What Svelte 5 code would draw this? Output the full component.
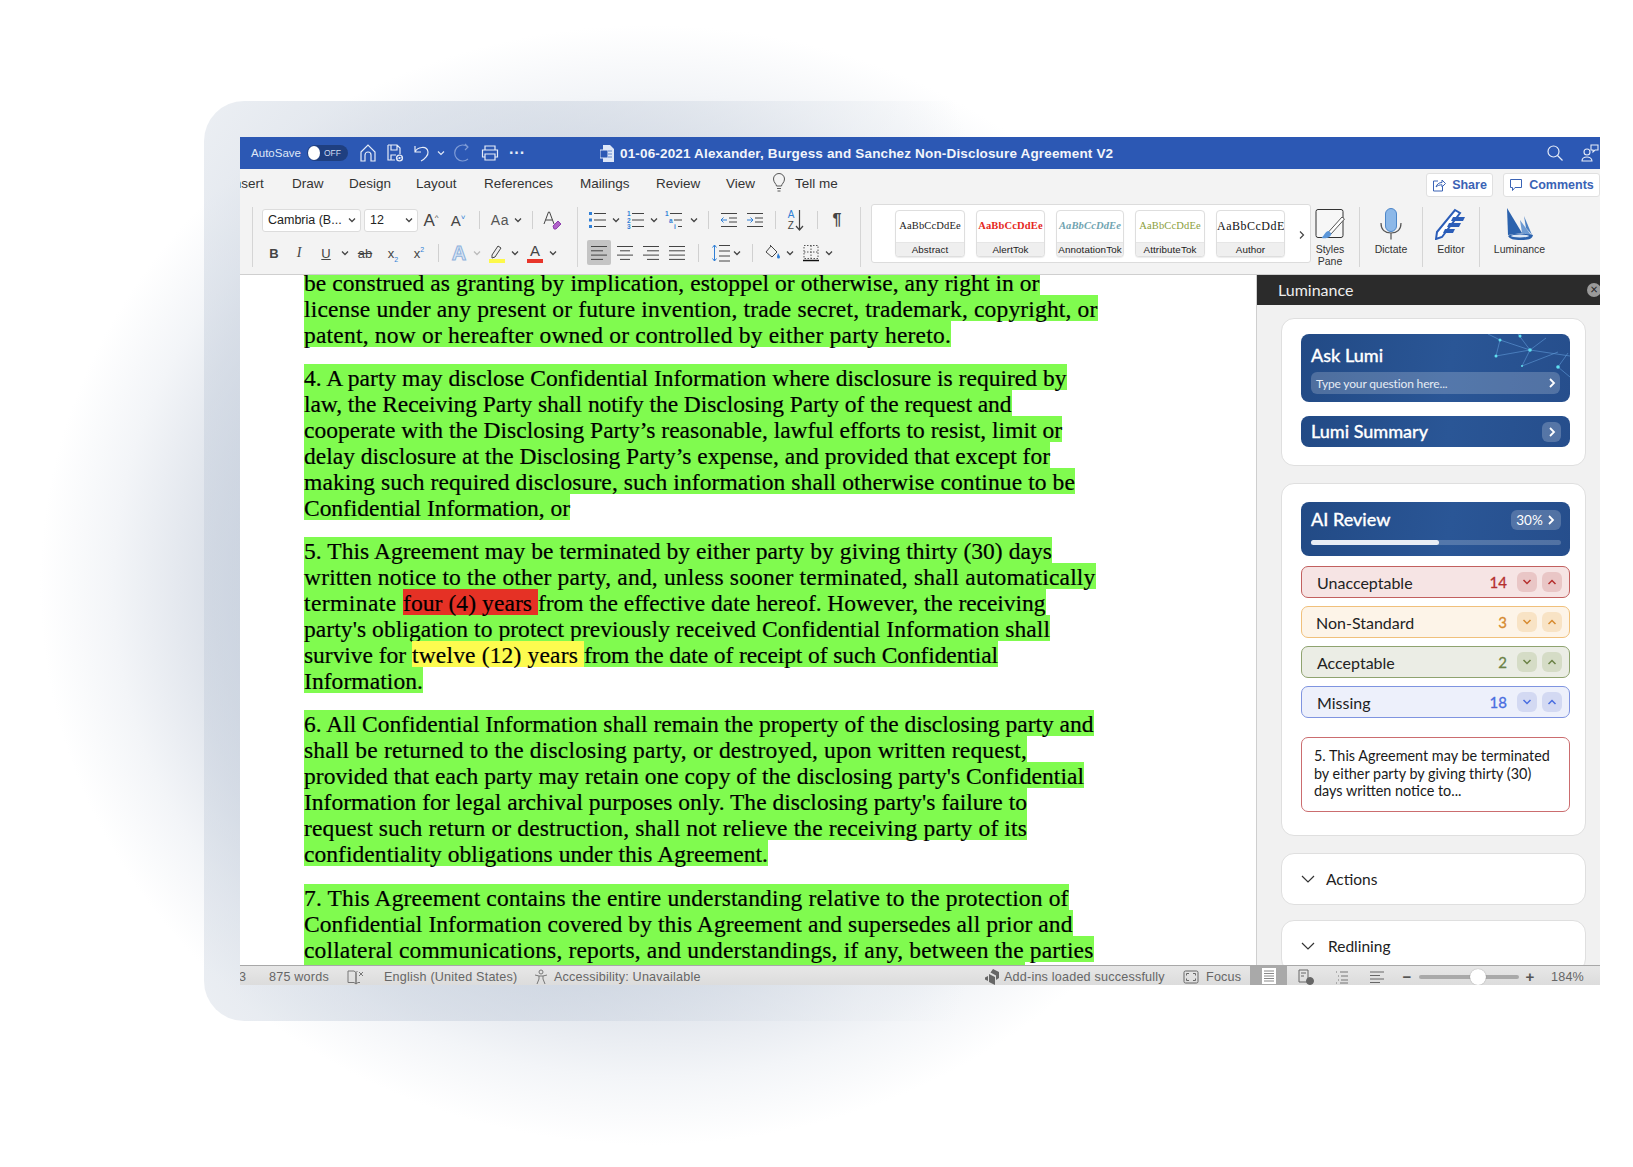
<script>
  // places cells in a flex row, so each one is centred on its x coordinate
  const lay = (items, x0) => {
    let x = x0;
    return items.map((it) => {
      const ml = it.c - it.w / 2 - x;
      x = it.c + it.w / 2;
      return { ...it, ml };
    });
  };
  const c = (k, cx, w = 24) => ({ k, c: cx, w });

  const titleItems = lay(
    [c('autosave', 276, 52), c('toggle', 327.5, 41), c('home', 368), c('save', 395), c('undo', 422), c('chevw', 441, 10), c('redo', 463), c('print', 490), c('dots', 517), c('docicon', 607, 16), c('title', 867, 494), c('search', 1555), c('people', 1590)],
    240
  );

  const tabs = [
    ['Insert', 230, 62], ['Draw', 292, 57], ['Design', 349, 67], ['Layout', 416, 68],
    ['References', 484, 96], ['Mailings', 580, 76], ['Review', 656, 70], ['View', 726, 46]
  ];

  const row1a = lay([c('font', 311.5, 99), c('size', 391, 54), c('growA', 431), c('shrinkA', 458), c('sep', 479, 1), c('aa', 500), c('chev', 518, 12), c('sep', 532, 1), c('clear', 552)], 253);
  const row2a = lay([c('B', 274), c('I', 299), c('U', 326), c('chev', 345, 12), c('ab', 365), c('x2', 393), c('xs', 419), c('sep', 438, 1), c('effectA', 459), c('chevl', 477, 12), c('hilite', 497), c('chev', 515, 12), c('colorA', 535), c('chev', 553, 12)], 253);
  const row1b = lay([c('bullets', 598), c('chev', 616, 12), c('numbers', 636), c('chev', 654, 12), c('multi', 674), c('chev', 694, 12), c('sep', 708, 1), c('outdent', 729), c('indent', 755), c('sep', 775, 1), c('sort', 796), c('sep', 817, 1), c('pilcrow', 837)], 578);
  const row2b = lay([c('alignL', 599), c('alignC', 625), c('alignR', 651), c('alignJ', 677), c('sep', 698, 1), c('spacing', 721), c('chev', 737, 12), c('sep', 752, 1), c('fill', 773), c('chev', 790, 12), c('borders', 811), c('chev', 829, 12)], 578);

  const styles = [
    { name: 'Abstract', cls: 's-abs', w: 70 },
    { name: 'AlertTok', cls: 's-alert', w: 69 },
    { name: 'AnnotationTok', cls: 's-anno', w: 68 },
    { name: 'AttributeTok', cls: 's-attr', w: 70 },
    { name: 'Author', cls: 's-auth', w: 69 }
  ];

  // a line is [right edge, text]; marked lines list their pieces as [text, width, mark]
  const paragraphs = [
    [
      [1039.5, 'be construed as granting by implication, estoppel or otherwise, any right in or'],
      [1097.5, 'license under any present or future invention, trade secret, trademark, copyright, or'],
      [951, 'patent, now or hereafter owned or controlled by either party hereto.']
    ],
    [
      [1066.5, '4. A party may disclose Confidential Information where disclosure is required by'],
      [1011.5, 'law, the Receiving Party shall notify the Disclosing Party of the request and'],
      [1062, 'cooperate with the Disclosing Party’s reasonable, lawful efforts to resist, limit or'],
      [1050, 'delay disclosure at the Disclosing Party’s expense, and provided that except for'],
      [1075, 'making such required disclosure, such information shall otherwise continue to be'],
      [570, 'Confidential Information, or']
    ],
    [
      [1052, '5. This Agreement may be terminated by either party by giving thirty (30) days'],
      [1095.5, 'written notice to the other party, and, unless sooner terminated, shall automatically'],
      [1045.5, [['terminate ', 99, ''], ['four (4) years ', 135, 'mark-red'], ['from the effective date hereof. However, the receiving', 507.5, '']]],
      [1050, "party's obligation to protect previously received Confidential Information shall"],
      [998, [['survive for ', 108, ''], ['twelve (12) years ', 172, 'mark-yellow'], ['from the date of receipt of such Confidential', 414, '']]],
      [423, 'Information.']
    ],
    [
      [1093.5, '6. All Confidential Information shall remain the property of the disclosing party and'],
      [1027, 'shall be returned to the disclosing party, or destroyed, upon written request,'],
      [1084, "provided that each party may retain one copy of the disclosing party's Confidential"],
      [1027, "Information for legal archival purposes only. The disclosing party's failure to"],
      [1027, 'request such return or destruction, shall not relieve the receiving party of its'],
      [768, 'confidentiality obligations under this Agreement.']
    ],
    [
      [1068.5, '7. This Agreement contains the entire understanding relative to the protection of'],
      [1072.5, 'Confidential Information covered by this Agreement and supersedes all prior and'],
      [1093.5, 'collateral communications, reports, and understandings, if any, between the parties'],
      [1025, '\u00a0']
    ]
  ];
  const DOC_LEFT = 304;

  // squeeze or stretch a piece of text with letter spacing so it ends where the reference does
  function fit(el, width) {
    const range = document.createRange();
    range.selectNodeContents(el);
    const natural = range.getBoundingClientRect().width;
    const chars = el.textContent.length;
    if (chars > 1) el.style.letterSpacing = (width - natural) / chars + 'px';
  }

  const reviewRows = [
    { label: 'Unacceptable', count: 14, cls: 'red', pad: 15 },
    { label: 'Non-Standard', count: 3, cls: 'orange', pad: 14 },
    { label: 'Acceptable', count: 2, cls: 'green', pad: 15 },
    { label: 'Missing', count: 18, cls: 'blue', pad: 15 }
  ];

  const statusItems = lay(
    [c('s3', 245, 12), c('words', 302, 66), c('book', 356, 18), c('lang', 451, 134), c('a11y', 541, 16), c('acc', 627, 146), c('addicon', 992, 16), c('addins', 1086, 164), c('focusicon', 1191, 16), c('focus', 1224, 36), c('viewprint', 1268.5, 37), c('viewweb', 1306, 20), c('viewoutline', 1342, 20), c('viewdraft', 1377, 20), c('minus', 1407, 12), c('slider', 1469, 100), c('plus', 1530, 12), c('zoom', 1571, 40)],
    240
  );
</script>

{#snippet bars(lines)}
  <svg width="20" height="20" viewBox="0 0 20 20" fill="none" stroke="#444" stroke-width="1">
    {#each lines as [a, b], i}
      <path d="M{a} {3.5 + i * 4.3}H{b}" />
    {/each}
  </svg>
{/snippet}

{#snippet icon(k)}
  {#if k === 'sep'}<span class="vsep"></span>
  {:else if k === 'chev'}
    <svg width="10" height="10" viewBox="0 0 10 10" fill="none" stroke="#444" stroke-width="1.3"><path d="M2 3.5l3 3 3-3" /></svg>
  {:else if k === 'chevl'}
    <svg width="10" height="10" viewBox="0 0 10 10" fill="none" stroke="#bbb" stroke-width="1.3"><path d="M2 3.5l3 3 3-3" /></svg>
  {:else if k === 'chevw'}
    <svg width="10" height="10" viewBox="0 0 10 10" fill="none" stroke="#dfe7f7" stroke-width="1.2"><path d="M2 3.5l3 3 3-3" /></svg>
  {:else if k === 'autosave'}<span class="autosave">AutoSave</span>
  {:else if k === 'toggle'}<span class="toggle"><i></i><b>OFF</b></span>
  {:else if k === 'home'}
    <svg width="18" height="20" viewBox="0 0 18 20" fill="none" stroke="#e6ecf8" stroke-width="1.2"><path d="M2 9l7-7 7 7v9h-4v-6a3 3 0 0 0-6 0v6H2z" /></svg>
  {:else if k === 'save'}
    <svg width="18" height="20" viewBox="0 0 18 20" fill="none" stroke="#e6ecf8" stroke-width="1.2"><path d="M2 2h9l3 3v6M2 2v15h7M5 2v5h6V2M5 17v-5h5" /><circle cx="13.5" cy="15" r="3.6" fill="#e6ecf8" stroke="none" /><path d="M11.8 15a1.8 1.8 0 0 1 3.4-.6M15.2 15a1.8 1.8 0 0 1-3.4.6" stroke="#2c58b4" /></svg>
  {:else if k === 'undo'}
    <svg width="18" height="20" viewBox="0 0 18 20" fill="none" stroke="#e6ecf8" stroke-width="1.2"><path d="M2 3v6h6M2 9c2-5 12-7 13 0 .4 3-3 7-7 9" /></svg>
  {:else if k === 'redo'}
    <svg width="18" height="20" viewBox="0 0 18 20" fill="none" stroke="#7e9bd6" stroke-width="1.2"><path d="M14 4a8 8 0 1 0 0 12M11 1l3 3-3 3" /></svg>
  {:else if k === 'print'}
    <svg width="18" height="18" viewBox="0 0 18 18" fill="none" stroke="#e6ecf8" stroke-width="1.2"><path d="M4 6V2h10v4M4 13H1.500V6h15v7H14M4 10h10v6H4z" /></svg>
  {:else if k === 'dots'}<span class="dots">···</span>
  {:else if k === 'docicon'}
    <svg width="14" height="17" viewBox="0 0 14 17"><path d="M3 0h7l4 4v13H3z" fill="#dde6f7" /><rect y="5" width="8" height="8" fill="#2c58b4" stroke="#dde6f7" /><path d="M8 6h4M8 9h4M8 12h4" stroke="#5f83cc" /></svg>
  {:else if k === 'title'}<span class="doc-title">01-06-2021 Alexander, Burgess and Sanchez Non-Disclosure Agreement V2</span>
  {:else if k === 'search'}
    <svg width="18" height="18" viewBox="0 0 18 18" fill="none" stroke="#e6ecf8" stroke-width="1.2"><circle cx="7.500" cy="7.500" r="5.500" /><path d="M11.500 11.500l5 5" /></svg>
  {:else if k === 'people'}
    <svg width="20" height="20" viewBox="0 0 20 20" fill="none" stroke="#e6ecf8" stroke-width="1.1"><circle cx="7" cy="9" r="3" /><path d="M2 18c0-3 3-4 5-4s5 1 5 4zM11 2h7v5h-3l-2 2V7h-2z" /></svg>
  {:else if k === 'font'}<span class="combo">Cambria (B...<svg width="10" height="10" viewBox="0 0 10 10" fill="none" stroke="#444" stroke-width="1.300"><path d="M2 3.500l3 3 3-3" /></svg></span>
  {:else if k === 'size'}<span class="combo">12<svg width="10" height="10" viewBox="0 0 10 10" fill="none" stroke="#444" stroke-width="1.300"><path d="M2 3.500l3 3 3-3" /></svg></span>
  {:else if k === 'growA'}<span class="glyph big">A<sup>^</sup></span>
  {:else if k === 'shrinkA'}<span class="glyph mid">A<sup class="blue-sup">˅</sup></span>
  {:else if k === 'aa'}<span class="glyph aa">Aa</span>
  {:else if k === 'clear'}
    <svg width="22" height="22" viewBox="0 0 22 22" fill="none"><path d="M3 15L7.500 3h1L13 15M4.800 11h6.500" stroke="#444" stroke-width="1" /><path d="M12 17l5-5 3 3-5 5h-2z" fill="#b061c8" stroke="#8e3fae" /></svg>
  {:else if k === 'B'}<span class="glyph fmt bold">B</span>
  {:else if k === 'I'}<span class="glyph fmt ital">I</span>
  {:else if k === 'U'}<span class="glyph fmt under">U</span>
  {:else if k === 'ab'}<span class="glyph fmt strike">ab</span>
  {:else if k === 'x2'}<span class="glyph fmt">x<sub>2</sub></span>
  {:else if k === 'xs'}<span class="glyph fmt">x<sup>2</sup></span>
  {:else if k === 'effectA'}<span class="glyph effect">A</span>
  {:else if k === 'hilite'}
    <svg width="18" height="22" viewBox="0 0 18 22" fill="none"><path d="M4 13l6-9 3 2-6 9-3 1z" stroke="#444" fill="#eee" /><rect x="1" y="17" width="16" height="4" fill="#fdf94a" /></svg>
  {:else if k === 'colorA'}<span class="glyph color">A</span>
  {:else if k === 'bullets'}
    <svg width="20" height="20" viewBox="0 0 20 20" fill="none" stroke="#444">
      <path d="M6 3.500h12M6 10h12M6 16.500h12" />
      <g fill="#2f7fd6" stroke="none"><rect x="1" y="2" width="3" height="3" /><rect x="1" y="8.500" width="3" height="3" /><rect x="1" y="15" width="3" height="3" /></g>
    </svg>
  {:else if k === 'numbers'}
    <svg width="20" height="20" viewBox="0 0 20 20" fill="none" stroke="#444">
      <path d="M6 3.500h12M6 10h12M6 16.500h12" />
      <g fill="#2f7fd6" stroke="none" font-size="6.500" font-family="Liberation Sans" font-weight="700"><text x="1" y="6">1</text><text x="1" y="12.500">2</text><text x="1" y="19">3</text></g>
    </svg>
  {:else if k === 'multi'}
    <svg width="20" height="20" viewBox="0 0 20 20" fill="none" stroke="#444">
      <path d="M6 3.500h12M10 10h8M14 16.500h4" />
      <g fill="#2f7fd6" stroke="none" font-size="6.500" font-family="Liberation Sans" font-weight="700"><text x="1" y="6">1</text><text x="5" y="12.500">a</text><text x="10" y="19">i</text></g>
    </svg>
  {:else if k === 'outdent' || k === 'indent'}
    <svg width="20" height="20" viewBox="0 0 20 20" fill="none" stroke="#444">
      <path d="M2 3.500h16M10 8h8M10 12h8M2 16.500h16" />
      {#if k === 'outdent'}<path d="M8 10H2M4.500 7.500L2 10l2.500 2.500" stroke="#2f7fd6" />
      {:else}<path d="M2 10h6M5.500 7.500L8 10l-2.500 2.500" stroke="#2f7fd6" />{/if}
    </svg>
  {:else if k === 'sort'}<span class="sort"><span><b>A</b><em>Z</em></span><svg width="9" height="24" viewBox="0 0 9 24" fill="none" stroke="#444" stroke-width="1.200"><path d="M4.500 2v20M1 18l3.500 4L8 18" /></svg></span>
  {:else if k === 'pilcrow'}<span class="glyph pil">¶</span>
  {:else if k === 'alignL'}{@render bars([[2, 18], [2, 14], [2, 18], [2, 14]])}
  {:else if k === 'alignC'}{@render bars([[2, 18], [5, 15], [2, 18], [5, 15]])}
  {:else if k === 'alignR'}{@render bars([[2, 18], [6, 18], [2, 18], [6, 18]])}
  {:else if k === 'alignJ'}{@render bars([[2, 18], [2, 18], [2, 18], [2, 18]])}
  {:else if k === 'spacing'}
    <svg width="20" height="22" viewBox="0 0 20 22" fill="none" stroke="#444"><path d="M8 3.500h11M8 9h11M8 14h11M8 19h11" /><path d="M3.500 3v16M1.500 5.500l2-2.500 2 2.500M1.500 16.500l2 2.500 2-2.500" stroke="#2f7fd6" /></svg>
  {:else if k === 'fill'}
    <svg width="20" height="20" viewBox="0 0 20 20" fill="none" stroke="#444"><path d="M8 3l6 6-5 5-6-5zM8 3l-1-1" /><path d="M15 10c1 2 2 3 2 4a1.500 1.500 0 0 1-3 0c0-1 .5-2 1-4z" fill="#2f7fd6" stroke="none" /></svg>
  {:else if k === 'borders'}
    <svg width="20" height="20" viewBox="0 0 20 20" fill="none" stroke="#555" stroke-dasharray="1.500 1.500"><path d="M3 2.500h14v13H3zM10 2.500v13M3 9h14" /><path d="M2 17.500h16" stroke="#111" stroke-width="1.500" stroke-dasharray="none" /></svg>
  {:else if k === 's3'}3
  {:else if k === 'words'}875 words
  {:else if k === 'book'}
    <svg width="18" height="16" viewBox="0 0 18 16" fill="none" stroke="#777"><path d="M1 2h6l2 1.500V15l-2-1.500H1zM9 3.500V15M9 3.500L10.500 2M12 3l4 4M16 3l-4 4M9 15l2-1.500h2" /></svg>
  {:else if k === 'lang'}English (United States)
  {:else if k === 'a11y'}
    <svg width="16" height="16" viewBox="0 0 16 16" fill="none" stroke="#777"><circle cx="8" cy="3" r="2" /><path d="M2 6l4 1h4l4-1M6 7v3l-2 5M10 7v3l2 5" /></svg>
  {:else if k === 'acc'}Accessibility: Unavailable
  {:else if k === 'addicon'}
    <svg width="16" height="16" viewBox="0 0 16 16" fill="#666"><path d="M9 0l6 3v6l-3 2V6.500L6.500 3.500zM5 5l6 3v8l-6-3zM1 8.500l3-1.500v5l-3-1.500z" /></svg>
  {:else if k === 'addins'}Add-ins loaded successfully
  {:else if k === 'focusicon'}
    <svg width="16" height="14" viewBox="0 0 16 14" fill="none" stroke="#666"><rect x="1" y="1" width="14" height="12" rx="1.500" /><path d="M3.500 5.500v-2h2.500M12.500 5.500v-2H10M3.500 8.500v2h2.500M12.500 8.500v2H10" /></svg>
  {:else if k === 'focus'}Focus
  {:else if k === 'viewprint'}
    <span class="view-on"><svg width="14" height="16" viewBox="0 0 14 16"><rect width="14" height="16" fill="#fff" /><path d="M2 3h10M2 5.500h10M2 8h10M2 10.500h10M2 13h10" stroke="#888" /></svg></span>
  {:else if k === 'viewweb'}
    <svg width="18" height="18" viewBox="0 0 18 18" fill="none" stroke="#666"><path d="M2 2h9v12H2zM4 5h5M4 8h3" /><circle cx="13" cy="13" r="3.500" fill="#666" /></svg>
  {:else if k === 'viewoutline'}
    <svg width="16" height="16" viewBox="0 0 16 16" fill="none" stroke="#777"><path d="M2 3h1M6 3h8M4 7h1M7 7h7M4 11h1M7 11h7M2 14h1M6 14h8" /></svg>
  {:else if k === 'viewdraft'}
    <svg width="16" height="16" viewBox="0 0 16 16" fill="none" stroke="#666"><path d="M1 3h14M1 6.500h10M1 10h14M1 13.500h10" /></svg>
  {:else if k === 'minus'}<span class="zoom-sign">−</span>
  {:else if k === 'plus'}<span class="zoom-sign">+</span>
  {:else if k === 'slider'}<span class="slider"><i></i></span>
  {:else if k === 'zoom'}184%
  {/if}
{/snippet}

{#snippet cells(items)}
  {#each items as it}
    <span class="cell" class:text={['s3','words','lang','acc','addins','focus','zoom'].includes(it.k)} style="width:{it.w}px;margin-left:{it.ml}px">{@render icon(it.k)}</span>
  {/each}
{/snippet}

{#snippet chevronRight()}
  <svg width="10" height="12" viewBox="0 0 10 12" fill="none" stroke="#fff" stroke-width="1.800"><path d="M3 2l4 4-4 4" /></svg>
{/snippet}

<div class="page">
  <div class="backdrop"></div>
  <div class="window">
    <header class="titlebar">{@render cells(titleItems)}</header>

    <nav class="tabs">
      <div class="tab-list">
        {#each tabs as [name, x, w], i}
          <span style="width:{w}px;{i === 0 ? `margin-left:${x - 240}px` : ''}">{name}</span>
        {/each}
        <svg class="bulb" width="14" height="20" viewBox="0 0 14 20" fill="none" stroke="#555"><path d="M4.500 13c0-2-3-3.500-3-7a5.500 5.500 0 0 1 11 0c0 3.500-3 5-3 7zM5 15.500h4M5.500 18h3" /></svg>
        <span>Tell me</span>
      </div>
      <div class="actions">
        <button class="share">
          <svg width="14" height="14" viewBox="0 0 14 14" fill="none" stroke="#3a63b5"><path d="M6 3H1.500v10h9V8M4 9c1-3 3-4.500 6-4.500V2l3.500 3.500L10 9V6.800C7.500 6.800 5.500 7.500 4 9z" /></svg>
          Share
        </button>
        <button class="comments">
          <svg width="14" height="14" viewBox="0 0 14 14" fill="none" stroke="#3a63b5"><path d="M1.500 1.500h11v8H6L3.500 12.500v-3h-2z" /></svg>
          Comments
        </button>
      </div>
    </nav>

    <section class="ribbon">
      <div class="group first">
        <div class="rrow">{@render cells(row1a)}</div>
        <div class="rrow">{@render cells(row2a)}</div>
      </div>
      <div class="group second">
        <span class="active-align"></span>
        <div class="rrow">{@render cells(row1b)}</div>
        <div class="rrow">{@render cells(row2b)}</div>
      </div>
      <div class="gallery">
        {#each styles as s}
          <div class="tile" style="width:{s.w}px">
            <div class="sample {s.cls}">AaBbCcDdEe</div>
            <div class="tile-name">{s.name}</div>
          </div>
        {/each}
        <svg class="more" width="8" height="10" viewBox="0 0 8 10" fill="none" stroke="#444" stroke-width="1.200"><path d="M2 1.500L5.500 5 2 8.500" /></svg>
      </div>
      <div class="tool t-styles">
        <svg width="30" height="32" viewBox="0 0 30 32" fill="none">
          <rect x="1" y="1.500" width="27" height="28" rx="2" stroke="#333" fill="#f7f7f7" />
          <path d="M29.500 11L16 26l-2.500-2L27 9z" fill="#fff" stroke="#555" />
          <path d="M13.500 23c-3 0-4 4-7 7 4 1 9 0 10-4.500z" fill="#5b96d8" />
        </svg>
        <span>Styles<br />Pane</span>
      </div>
      <div class="tool t-dictate">
        <svg width="24" height="32" viewBox="0 0 24 32" fill="none">
          <rect x="6.500" y="0.500" width="11" height="23" rx="5.500" fill="#8cb8e8" stroke="#4c86c8" />
          <path d="M2 15c0 7 4 10 10 10s10-3 10-10M12 25v6.500" stroke="#555" stroke-width="1.200" />
        </svg>
        <span>Dictate</span>
      </div>
      <div class="tool t-editor">
        <svg width="32" height="32" viewBox="0 0 32 32" fill="none">
          <path d="M20 2l5 3L7 29l-6 2 1-7z" fill="#fff" stroke="#2b5db8" stroke-width="2" />
          <path d="M18 9h12l-2 4H16zM14 15h12l-2 4H12zM10 21h10l-2 4H8z" fill="#2b5db8" />
        </svg>
        <span>Editor</span>
      </div>
      <div class="tool t-lum">
        <svg width="28" height="32" viewBox="0 0 28 32">
          <path d="M1 0l15 25-14 2z" fill="#2b62ad" />
          <path d="M14 12l11 15-9-2z" fill="#6e9bd2" />
          <path d="M18 8l8 19-6-7z" fill="#4b80c2" />
          <path d="M2 28c5-3 20-3 25-1-1 4-4 5-12 5s-11-1-13-4z" fill="#2b62ad" />
          <ellipse cx="14" cy="28" rx="9" ry="1.500" fill="#dce8f5" />
        </svg>
        <span>Luminance</span>
      </div>
    </section>

    <main class="body">
      <article class="doc">
        {#each paragraphs as lines}
          <div class="para">
            {#each lines as [end, text]}
              <div class="line" style="width:{end - DOC_LEFT}px">
                {#if Array.isArray(text)}
                  <span class="pieces">
                    {#each text as [piece, w, mark]}
                      <span class="piece {mark}" use:fit={w}>{piece}</span>
                    {/each}
                  </span>
                {:else}
                  <span class="line-text" use:fit={end - DOC_LEFT}>{text}</span>
                {/if}
              </div>
            {/each}
          </div>
        {/each}
      </article>

      <aside class="pane">
        <div class="pane-head">
          <span>Luminance</span>
          <span class="pane-close">×</span>
        </div>

        <div class="card first-card">
          <div class="blue ask">
            <svg class="network" width="90" height="44" viewBox="0 0 90 44" fill="none" stroke="#5f9ad8" stroke-width="0.600">
              <path d="M8 0l12 6-4 16M20 6l30 10 16-12M38 0l12 16-8 16M16 22l34-6 40 6M42 32l36-14M78 33l12 10M78 33l10-14" />
              <g fill="#5fe0f0" stroke="none">
                <circle cx="20" cy="6" r="1.500" /><circle cx="16" cy="22" r="1.500" /><circle cx="50" cy="16" r="1.800" />
                <circle cx="40" cy="2" r="1.500" /><circle cx="42" cy="32" r="1" /><circle cx="78" cy="33" r="1.800" />
              </g>
            </svg>
            <div class="heading">Ask Lumi</div>
            <div class="ask-input">
              <span>Type your question here...</span>
              {@render chevronRight()}
            </div>
          </div>
          <div class="blue summary">
            <div class="heading">Lumi Summary</div>
            <span class="chev-box">{@render chevronRight()}</span>
          </div>
        </div>

        <div class="card review-card">
          <div class="blue review">
            <div class="review-top">
              <div class="heading">AI Review</div>
              <span class="percent">30% {@render chevronRight()}</span>
            </div>
            <div class="progress"><i></i></div>
          </div>

          <div class="rows">
            {#each reviewRows as r}
              <div class="rv {r.cls}">
                <span class="rv-label" style="padding-left:{r.pad}px">{r.label}</span>
                <span class="rv-count">{r.count}</span>
                <span class="rv-btn"><svg width="10" height="8" viewBox="0 0 10 8" fill="none" stroke-width="1.500"><path d="M1.500 2L5 5.500 8.500 2" /></svg></span>
                <span class="rv-btn"><svg width="10" height="8" viewBox="0 0 10 8" fill="none" stroke-width="1.500"><path d="M1.500 6L5 2.500 8.500 6" /></svg></span>
              </div>
            {/each}
          </div>

          <div class="detail">5. This Agreement may be terminated by either party by giving thirty (30) days written notice to...</div>
        </div>

        <div class="card fold">
          <svg width="14" height="10" viewBox="0 0 14 10" fill="none" stroke="#333" stroke-width="1.200"><path d="M1 2l6 6 6-6" /></svg>
          <span>Actions</span>
        </div>
        <div class="card fold redline">
          <svg width="14" height="10" viewBox="0 0 14 10" fill="none" stroke="#333" stroke-width="1.200"><path d="M1 2l6 6 6-6" /></svg>
          <span>Redlining</span>
        </div>
      </aside>
    </main>

    <footer class="status">{@render cells(statusItems)}</footer>
  </div>
</div>

<style>
  :global(body) {
    margin: 0;
    background: #fff;
  }

  .page {
    position: relative;
    box-sizing: border-box;
    width: 1633px;
    height: 1167px;
    padding: 137px 33px 0 240px;
    overflow: hidden;
    background: radial-gradient(ellipse 610px 560px at 650px 585px, #aebbd0 0%, #bcc7d8 45%, #dde2ea 72%, #f3f5f8 88%, #fff 100%);
    font-family: 'Liberation Sans', sans-serif;
  }

  .backdrop {
    position: absolute;
    left: 204px;
    top: 101px;
    width: 900px;
    height: 920px;
    border-radius: 40px;
    background: radial-gradient(ellipse 560px 900px at 30% 50%, rgba(185, 197, 215, 0.6) 0%, rgba(200, 209, 222, 0.55) 50%, rgba(232, 236, 241, 0.5) 85%, rgba(255, 255, 255, 0) 100%);
  }

  .window {
    position: relative;
    display: flex;
    flex-direction: column;
    width: 1360px;
    height: 848px;
    overflow: hidden;
    background: #fff;
  }

  .cell {
    display: inline-flex;
    flex: none;
    align-items: center;
    justify-content: center;
  }

  /* title bar */
  .titlebar {
    display: flex;
    flex: none;
    align-items: center;
    height: 32px;
    background: #2c58b4;
    color: #fff;
  }
  .autosave {
    font-size: 11.500px;
    color: #dfe7f7;
  }
  .toggle {
    display: flex;
    align-items: center;
    width: 41px;
    height: 16px;
    border-radius: 8px;
    background: #1f3f80;
  }
  .toggle i {
    width: 12px;
    height: 14px;
    margin-left: 1px;
    border-radius: 50%;
    background: #fff;
  }
  .toggle b {
    margin-left: 4px;
    font-size: 8.500px;
    font-weight: 400;
    color: #d0dcf2;
  }
  .dots {
    font-size: 16px;
    font-weight: 700;
    color: #e6ecf8;
  }
  .doc-title {
    width: 100%;
    font-size: 13.500px;
    font-weight: 700;
    letter-spacing: 0.160px;
    white-space: nowrap;
    color: #f2f5fb;
  }

  /* tabs */
  .tabs {
    display: flex;
    flex: none;
    justify-content: space-between;
    height: 35px;
    background: #f3f3f3;
    color: #333;
    font-size: 13.500px;
  }
  .tab-list {
    display: flex;
    align-items: center;
    height: 28px;
    margin-top: 0;
  }
  .tab-list span {
    flex: none;
  }
  .bulb {
    margin-right: 9px;
  }
  .actions {
    display: flex;
    gap: 10px;
    padding-top: 4px;
  }
  .actions button {
    display: flex;
    align-items: center;
    justify-content: center;
    gap: 6px;
    height: 24px;
    padding: 0;
    border: 1px solid #e0e0e0;
    border-radius: 3px;
    background: #fff;
    color: #3a63b5;
    font: 700 12.500px 'Liberation Sans', sans-serif;
  }
  .share {
    width: 67px;
  }
  .comments {
    width: 97px;
  }

  /* ribbon */
  .ribbon {
    display: flex;
    flex: none;
    box-sizing: border-box;
    height: 71px;
    background: #f3f3f3;
    border-bottom: 1px solid #cfcfcf;
    color: #444;
  }
  .group {
    position: relative;
    box-sizing: border-box;
    height: 60px;
    margin-top: 3px;
  }
  .first {
    width: 325px;
    margin-left: 12px;
    border-left: 1px solid #d5d5d5;
  }
  .second {
    width: 284px;
    border-left: 1px solid #d5d5d5;
    border-right: 1px solid #d5d5d5;
  }
  .rrow {
    position: relative;
    display: flex;
    align-items: center;
    height: 24px;
    margin-top: 1px;
    margin-bottom: 9px;
  }
  .active-align {
    position: absolute;
    left: 9px;
    top: 33px;
    width: 24px;
    height: 25px;
    border-radius: 2px;
    background: #c4c4c4;
  }
  .vsep {
    display: block;
    width: 1px;
    height: 18px;
    background: #d0d0d0;
  }
  .combo {
    display: flex;
    align-items: center;
    justify-content: space-between;
    box-sizing: border-box;
    width: 100%;
    height: 23px;
    padding: 0 3px 0 5px;
    border: 1px solid #dcdcdc;
    border-radius: 3px;
    background: #fff;
    color: #222;
    font-size: 12.500px;
  }
  .glyph {
    color: #444;
    line-height: 1;
  }
  .big {
    font-size: 17px;
  }
  .mid {
    font-size: 15px;
  }
  .glyph sup {
    font-size: 8px;
    vertical-align: 6px;
    line-height: 0;
  }
  .blue-sup {
    color: #2f7fd6;
  }
  .aa {
    font-size: 14px;
    letter-spacing: 0.800px;
    color: #555;
  }
  .fmt {
    font-size: 13px;
  }
  .fmt sub,
  .fmt sup {
    font-size: 7px;
    color: #2f7fd6;
    line-height: 0;
  }
  .bold {
    font-weight: 700;
  }
  .ital {
    font-family: 'Liberation Serif', serif;
    font-style: italic;
    font-size: 14px;
  }
  .under {
    text-decoration: underline;
  }
  .strike {
    text-decoration: line-through;
  }
  .effect {
    font-size: 20px;
    color: #dbe6f4;
    -webkit-text-stroke: 1px #8eb2dc;
    font-weight: 700;
  }
  .color {
    display: block;
    width: 16px;
    padding-bottom: 1px;
    border-bottom: 4px solid #e8352a;
    font-size: 15px;
    text-align: center;
  }
  .sort {
    display: flex;
    align-items: center;
    gap: 1px;
  }
  .sort > span {
    display: flex;
    flex-direction: column;
    font-size: 10px;
    line-height: 11px;
  }
  .sort b {
    font-weight: 400;
    color: #2f7fd6;
  }
  .sort em {
    font-style: normal;
  }
  .pil {
    font-size: 16px;
    font-weight: 700;
  }

  .gallery {
    display: flex;
    flex: none;
    gap: 11px;
    box-sizing: border-box;
    align-items: flex-start;
    width: 440px;
    height: 59px;
    margin: 0 0 0 10px;
    padding: 5px 0 0 23px;
    border: 1px solid #dcdcdc;
    border-radius: 3px;
    background: #fff;
  }
  .tile {
    flex: none;
    box-sizing: border-box;
    height: 47px;
    overflow: hidden;
    border: 1px solid #dedede;
    border-radius: 4px;
    background: #fff;
    box-shadow: 0 1px 1px rgba(0, 0, 0, 0.08);
    text-align: center;
  }
  .sample {
    height: 31px;
    font: 10.500px / 30px 'Liberation Serif', serif;
    letter-spacing: 0.150px;
    white-space: nowrap;
    color: #222;
  }
  .s-alert {
    color: #e5291d;
    font-weight: 700;
  }
  .s-anno {
    color: #6fa3b0;
    font-style: italic;
    font-weight: 700;
  }
  .s-attr {
    color: #8a9e3c;
    font-weight: 400;
  }
  .s-auth {
    font-size: 12px;
    letter-spacing: 0.500px;
    color: #111;
  }
  .tile-name {
    height: 15px;
    border-top: 1px solid #e6e6e6;
    background: #efefef;
    font-size: 9.800px;
    letter-spacing: 0.100px;
    line-height: 14px;
    white-space: nowrap;
    color: #222;
  }
  .more {
    position: relative;
    flex: none;
    margin: 20px 0 0 2px;
  }

  .tool {
    display: flex;
    flex: none;
    flex-direction: column;
    align-items: center;
    box-sizing: border-box;
    height: 60px;
    margin-top: 3px;
    padding-top: 1px;
    font-size: 10.500px;
    line-height: 12px;
    text-align: center;
    color: #333;
  }
  .tool svg {
    flex: none;
    margin-bottom: 3px;
  }
  .t-styles {
    width: 48px;
    padding-right: 10px;
  }
  .t-dictate {
    width: 63px;
    border-left: 1px solid #d5d5d5;
  }
  .t-editor {
    width: 57px;
    border-left: 1px solid #d5d5d5;
  }
  .t-lum {
    width: 80px;
    border-left: 1px solid #d5d5d5;
  }

  /* document */
  .body {
    display: flex;
    flex: 1;
    min-height: 0;
  }
  .doc {
    flex: 1;
    min-width: 0;
    overflow: hidden;
    padding-left: 64px;
    background: #fff;
  }
  .para {
    margin-bottom: 17px;
  }
  .para:first-child {
    margin-top: -6px;
    margin-bottom: 17px;
  }
  .para:nth-child(4) {
    margin-bottom: 18px;
  }
  .line {
    height: 26px;
    background: #80fb4f;
    font: 23.500px / 26px 'Liberation Serif', serif;
    -webkit-text-stroke: 0.2px #000;
    white-space: nowrap;
    color: #000;
  }
  .line-text {
    display: inline-block;
    padding-top: 1px;
  }
  .pieces {
    display: flex;
  }
  .piece {
    flex: none;
    height: 26px;
    padding-top: 1px;
    box-sizing: border-box;
    white-space: pre;
  }
  .mark-red {
    background: #e53125;
  }
  .mark-yellow {
    background: #fdfb4f;
  }

  /* side pane */
  .pane {
    flex: none;
    box-sizing: border-box;
    width: 344px;
    overflow: hidden;
    border-left: 1px solid #cfcfcf;
    background: #f1f1f1;
    font-family: Lato, sans-serif;
  }
  .pane-head {
    position: relative;
    height: 30px;
    padding-left: 21px;
    background: #2b2b2b;
    color: #eee;
    font-size: 16px;
    line-height: 30px;
  }
  .pane-close {
    position: absolute;
    right: -1px;
    top: 8px;
    width: 14px;
    height: 14px;
    border-radius: 50%;
    background: #9a9a9a;
    color: #222;
    font-size: 13px;
    line-height: 13px;
    text-align: center;
  }
  .card {
    box-sizing: border-box;
    width: 305px;
    margin: 0 0 17px 24px;
    padding: 0 15px 0 19px;
    border: 1px solid #dfdfdf;
    border-radius: 13px;
    background: #fff;
  }
  .first-card {
    height: 148px;
    margin-top: 13px;
    padding-top: 15px;
  }
  .blue {
    position: relative;
    overflow: hidden;
    border-radius: 8px;
    background: linear-gradient(100deg, #224a85 0%, #2a5696 55%, #264e8c 100%);
    color: #fff;
  }
  .heading {
    padding-bottom: 2px;
    font-size: 18px;
    font-weight: 500;
    -webkit-text-stroke: 0.3px #fff;
    white-space: nowrap;
  }
  .ask {
    height: 68px;
    padding: 10px 10px 0;
    box-sizing: border-box;
  }
  .network {
    position: absolute;
    right: 0;
    top: 0;
  }
  .ask-input {
    display: flex;
    align-items: center;
    justify-content: space-between;
    height: 22px;
    margin-top: 4px;
    padding: 0 3px 0 5px;
    border-radius: 6px;
    background: rgba(255, 255, 255, 0.2);
    color: #e6ecf5;
    font-size: 12px;
    letter-spacing: -0.150px;
  }
  .summary {
    display: flex;
    align-items: center;
    justify-content: space-between;
    height: 31px;
    margin-top: 14px;
    padding: 0 9px 0 10px;
  }
  .chev-box {
    display: flex;
    align-items: center;
    justify-content: center;
    width: 19px;
    height: 20px;
    border-radius: 6px;
    background: rgba(255, 255, 255, 0.22);
  }
  .review-card {
    height: 353px;
    padding-top: 18px;
  }
  .review {
    box-sizing: border-box;
    height: 54px;
    padding: 8px 9px 0 10px;
  }
  .review-top {
    display: flex;
    align-items: center;
    justify-content: space-between;
    height: 20px;
  }
  .percent {
    display: flex;
    align-items: center;
    justify-content: center;
    gap: 3px;
    width: 50px;
    height: 20px;
    border-radius: 6px;
    background: rgba(255, 255, 255, 0.2);
    font-size: 13.500px;
  }
  .progress {
    height: 4.500px;
    margin-top: 10px;
    border-radius: 3px;
    background: rgba(255, 255, 255, 0.2);
  }
  .progress i {
    display: block;
    width: 128px;
    height: 100%;
    border-radius: 3px;
    background: #e8edf5;
  }
  .rows {
    display: flex;
    flex-direction: column;
    gap: 8px;
    margin-top: 10px;
  }
  .rv {
    display: flex;
    align-items: center;
    box-sizing: border-box;
    height: 32px;
    padding-right: 7px;
    border: 1px solid;
    border-radius: 7px;
    font-size: 16px;
    color: #222;
  }
  .rv-label {
    flex: 1;
  }
  .rv-count {
    margin-right: 10px;
    font-size: 15px;
    -webkit-text-stroke: 0.3px currentColor;
  }
  .rv-btn {
    display: flex;
    align-items: center;
    justify-content: center;
    width: 20px;
    height: 20px;
    margin-left: 5px;
    border-radius: 6px;
  }
  .rv-btn:nth-of-type(3) {
    margin-left: 0;
  }
  .red {
    border-color: #c2605f;
    background: #f6e4e4;
  }
  .red .rv-count {
    color: #b5302e;
  }
  .red .rv-btn {
    background: #e9c6c6;
    stroke: #b5302e;
  }
  .orange {
    border-color: #f0c07b;
    background: #fdf4e8;
  }
  .orange .rv-count {
    color: #d68b30;
  }
  .orange .rv-btn {
    background: #f8e3c5;
    stroke: #d68b30;
  }
  .green {
    border-color: #8fa36f;
    background: #ebede5;
  }
  .green .rv-count {
    color: #6b8246;
  }
  .green .rv-btn {
    background: #d5dcc6;
    stroke: #6b8246;
  }
  .rv.blue {
    overflow: visible;
    border-color: #7f94e0;
    background: #edf0fb;
  }
  .rv.blue .rv-count {
    color: #4a6ee0;
  }
  .rv.blue .rv-btn {
    background: #d3d9f2;
    stroke: #4a6ee0;
  }
  .detail {
    box-sizing: border-box;
    height: 75px;
    margin-top: 19px;
    padding: 9px 12px 0 12px;
    border: 1.500px solid #cb6d6f;
    border-radius: 7px;
    font-size: 14.400px;
    line-height: 17.500px;
    color: #1a1a1a;
  }
  .fold {
    display: flex;
    align-items: center;
    gap: 11px;
    height: 52px;
    margin-bottom: 15px;
    font-size: 15.500px;
    color: #222;
  }
  .redline {
    gap: 13px;
    height: 52px;
    margin-bottom: 0;
  }

  /* status bar */
  .status {
    display: flex;
    flex: none;
    box-sizing: border-box;
    align-items: center;
    height: 20px;
    padding-top: 2px;
    border-top: 1px solid #a8a8a8;
    background: linear-gradient(#e7e7e7, #dcdcdc);
    color: #666;
    font-size: 12.600px;
    letter-spacing: 0.200px;
    white-space: nowrap;
  }
  .text {
    justify-content: flex-start;
  }
  .view-on {
    display: flex;
    align-items: center;
    justify-content: center;
    width: 37px;
    height: 19px;
    margin-top: -2px;
    background: #a9a9a9;
  }
  .zoom-sign {
    font-size: 15px;
    font-weight: 700;
    color: #555;
  }
  .slider {
    position: relative;
    display: block;
    width: 100%;
    height: 4px;
    border-radius: 2px;
    background: #a9a9a9;
  }
  .slider i {
    position: absolute;
    left: 51px;
    top: -6px;
    width: 16px;
    height: 16px;
    border-radius: 50%;
    background: #fff;
    box-shadow: 0 0 1px rgba(0, 0, 0, 0.4);
  }
</style>
